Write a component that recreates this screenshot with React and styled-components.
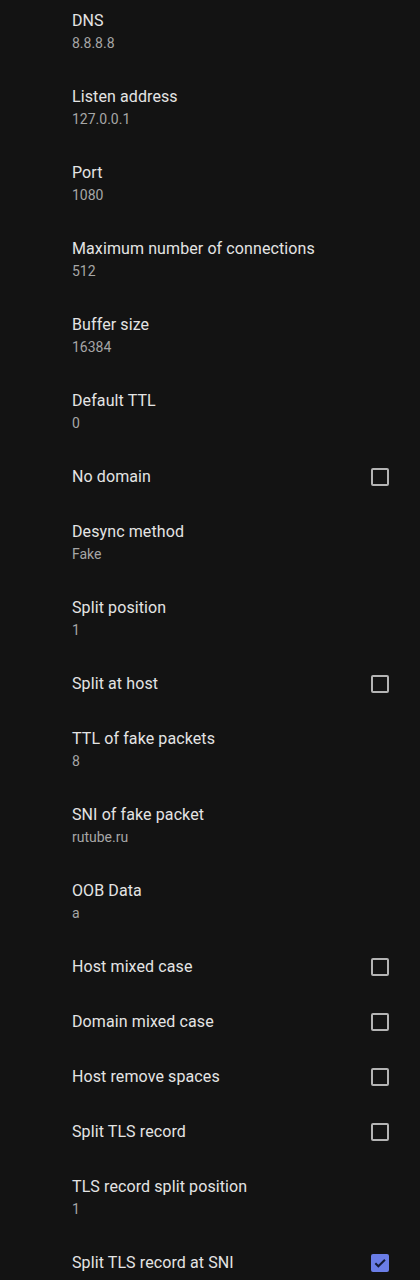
import styled, { createGlobalStyle } from "styled-components";

const PREFS = [
  { id: "dns", title: "DNS", summary: "8.8.8.8" },
  { id: "ip", title: "Listen address", summary: "127.0.0.1" },
  { id: "port", title: "Port", summary: "1080" },
  { id: "max", title: "Maximum number of connections", summary: "512" },
  { id: "buf", title: "Buffer size", summary: "16384" },
  { id: "ttl", title: "Default TTL", summary: "0" },
  { id: "nodomain", title: "No domain", checked: false },
  { id: "desync", title: "Desync method", summary: "Fake" },
  { id: "split", title: "Split position", summary: "1" },
  { id: "splithost", title: "Split at host", checked: false },
  { id: "fakettl", title: "TTL of fake packets", summary: "8" },
  { id: "sni", title: "SNI of fake packet", summary: "rutube.ru" },
  { id: "oob", title: "OOB Data", summary: "a" },
  { id: "hostcase", title: "Host mixed case", checked: false },
  { id: "domcase", title: "Domain mixed case", checked: false },
  { id: "hostspaces", title: "Host remove spaces", checked: false },
  { id: "tlsrec", title: "Split TLS record", checked: false },
  { id: "tlspos", title: "TLS record split position", summary: "1" },
  { id: "tlssni", title: "Split TLS record at SNI", checked: true },
];

const GlobalStyle = createGlobalStyle`
  body {
    margin: 0;
    background: #131313;
    font-family: Roboto, "Noto Sans", sans-serif;
  }
`;

const Screen = styled.div`
  width: 420px;
  height: 1280px;
  overflow: hidden;
  background: #131313;
`;

const List = styled.div`
  display: flex;
  flex-direction: column;
  margin-top: -7px;
`;

const Row = styled.div`
  display: flex;
  align-items: ${(p) => (p.$toggle ? "flex-start" : "center")};
  padding: ${(p) => (p.$toggle ? "16px 24px 0 72px" : "16px 24px 16px 72px")};
  height: ${(p) => (p.$toggle ? "55px" : "76px")};
  box-sizing: border-box;
`;

const Texts = styled.div`
  flex: 1;
  display: flex;
  flex-direction: column;
`;

const Title = styled.div`
  font-size: 16px;
  line-height: 24px;
  color: #e4e4e4;
  letter-spacing: 0.1px;
`;

const Summary = styled.div`
  font-size: 14px;
  line-height: 20px;
  color: #a6a6a6;
`;

const Box = styled.div`
  width: 18px;
  height: 18px;
  box-sizing: border-box;
  margin-top: 3px;
  margin-right: 7px;
  border-radius: 2px;
  border: 2px solid ${(p) => (p.$on ? "#6a7de6" : "#b4b4b4")};
  background: ${(p) => (p.$on ? "#6a7de6" : "transparent")};
  display: flex;
  align-items: center;
  justify-content: center;
`;

const Check = () => (
  <svg width="16" height="16" viewBox="0 0 24 24">
    <path d="M4 12.5l5.2 5.2L20.5 6.5" fill="none" stroke="#131a36" strokeWidth="3.4" />
  </svg>
);

const App = () => {
  return (
    <Screen>
      <GlobalStyle />
      <List>
        {PREFS.map((pref) => {
          const toggle = pref.checked !== undefined;
          return (
            <Row key={pref.id} $toggle={toggle}>
              <Texts>
                <Title>{pref.title}</Title>
                {pref.summary && <Summary>{pref.summary}</Summary>}
              </Texts>
              {toggle && <Box $on={pref.checked}>{pref.checked && <Check />}</Box>}
            </Row>
          );
        })}
      </List>
    </Screen>
  );
};

export default App;
